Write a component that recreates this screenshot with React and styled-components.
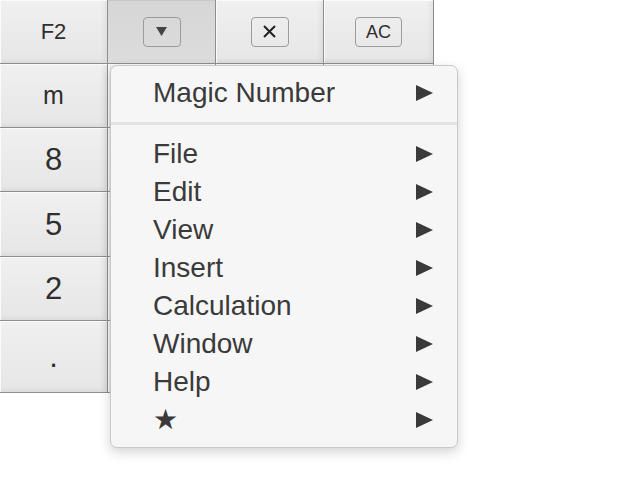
import styled, { createGlobalStyle } from "styled-components";

const GlobalStyle = createGlobalStyle`
  html, body {
    margin: 0;
    padding: 0;
    background: #ffffff;
    font-family: "Liberation Sans", Arial, sans-serif;
  }
`;

const Stage = styled.div`
  position: relative;
  width: 640px;
  height: 480px;
`;

const Keypad = styled.div`
  display: grid;
  grid-template-columns: 108px 108px 108px 110px;
  grid-template-rows: 64px 64px 64px 65px 64px 72px;
  width: 434px;
`;

const Key = styled.div`
  box-sizing: border-box;
  display: flex;
  align-items: center;
  justify-content: center;
  border-right: 1px solid #8e8e8e;
  border-bottom: 1px solid #8e8e8e;
  background: ${(p) =>
    p.$pressed
      ? "linear-gradient(to bottom, #d6d6d6, #dcdcdc)"
      : "linear-gradient(to bottom, #f0f0f0, #e6e6e6)"};
  box-shadow: ${(p) =>
    p.$pressed
      ? "inset 0 1px 0 #c8c8c8"
      : "inset 1px 1px 0 #fbfbfb, inset -3px -2px 4px rgba(0,0,0,0.05)"};
  color: #2f2f2f;
  font-size: ${(p) => p.$size || 31}px;
  line-height: 1;
`;

const KeyBox = styled.span`
  box-sizing: border-box;
  display: inline-flex;
  align-items: center;
  justify-content: center;
  min-width: 38px;
  height: 30px;
  padding: 0 10px;
  border: 1px solid #9c9c9c;
  border-radius: 4px;
  font-size: 18px;
  color: #2f2f2f;
`;

const Menu = styled.div`
  position: absolute;
  left: 110px;
  top: 65px;
  box-sizing: border-box;
  width: 348px;
  padding: 8px 0;
  background: #f6f6f6;
  border: 1px solid #c9c9c9;
  border-radius: 7px;
  box-shadow: 0 4px 12px rgba(0, 0, 0, 0.18);
  color: #3a3a3a;
`;

const Item = styled.div`
  display: flex;
  align-items: center;
  justify-content: space-between;
  height: 38px;
  padding: 0 24px 0 42px;
  font-size: 28px;
  line-height: 1;
`;

const Separator = styled.div`
  height: 3px;
  margin: 10px 0;
  background: #e3e3e3;
`;

const Arrow = () => (
  <svg width="17" height="16" viewBox="0 0 17 16">
    <path d="M0 0 L17 8 L0 16 Z" fill="#3a3a3a" />
  </svg>
);

const DownTriangle = () => (
  <svg width="11" height="9" viewBox="0 0 11 9">
    <path d="M0 0 L11 0 L5.5 9 Z" fill="#444" />
  </svg>
);

const Cross = () => (
  <svg width="13" height="13" viewBox="0 0 13 13">
    <path d="M1 1 L12 12 M12 1 L1 12" stroke="#222" strokeWidth="2" />
  </svg>
);

// only the first column is visible; the rest sits under the open menu
const rows = [
  ["m", "", "", ""],
  ["8", "", "", ""],
  ["5", "", "", ""],
  ["2", "", "", ""],
  [".", "", "", ""],
];

const items = ["File", "Edit", "View", "Insert", "Calculation", "Window", "Help", "★"];

export default function App() {
  return (
    <Stage>
      <GlobalStyle />
      <Keypad>
        <Key $size={22}>F2</Key>
        <Key $pressed>
          <KeyBox>
            <DownTriangle />
          </KeyBox>
        </Key>
        <Key>
          <KeyBox>
            <Cross />
          </KeyBox>
        </Key>
        <Key>
          <KeyBox>AC</KeyBox>
        </Key>
        {rows.flat().map((label, i) => (
          <Key key={i} $size={label === "m" ? 25 : 31}>
            {label}
          </Key>
        ))}
      </Keypad>
      <Menu>
        <Item>
          <span>Magic Number</span>
          <Arrow />
        </Item>
        <Separator />
        {items.map((label) => (
          <Item key={label}>
            <span>{label}</span>
            <Arrow />
          </Item>
        ))}
      </Menu>
    </Stage>
  );
}
